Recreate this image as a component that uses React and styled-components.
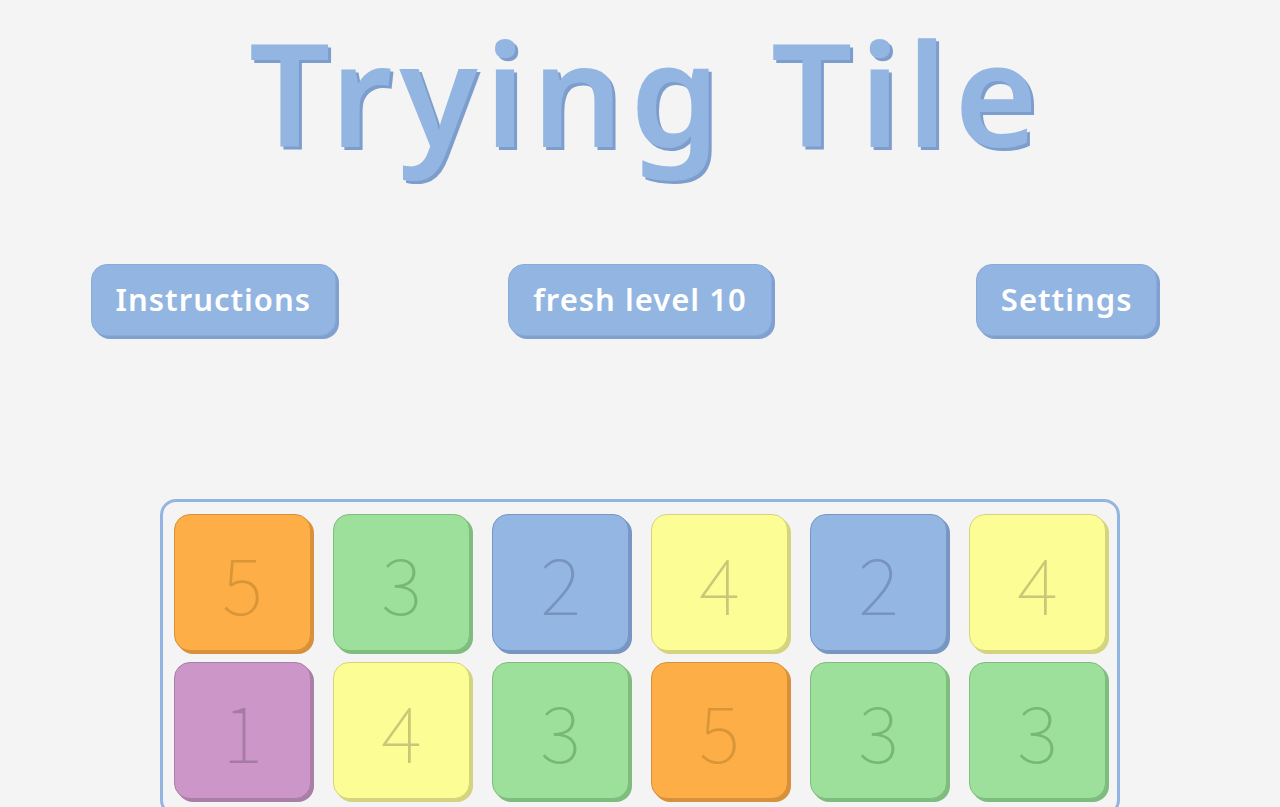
import React from "react";
import styled, { createGlobalStyle } from "styled-components";

const Global = createGlobalStyle`
  html, body { margin: 0; padding: 0; background: #f4f4f4; }
  body { font-family: "Noto Sans", "Open Sans", sans-serif; }
`;

const Page = styled.div`
  display: flex;
  flex-direction: column;
  align-items: center;
  min-height: 807px;
`;

const Title = styled.h1`
  margin: 0;
  padding: 0 0 12px 14px;
  font-family: "Noto Sans", sans-serif;
  font-weight: 600;
  font-size: 143px;
  line-height: 184px;
  letter-spacing: 7px;
  color: #93b5e1;
  text-shadow: 3px 3px 0 #7d9ecd;
`;

const ButtonRow = styled.div`
  margin-top: 68px;
  display: grid;
  grid-template-columns: repeat(3, 1fr);
  width: 100%;
  justify-items: center;
`;

const MenuButton = styled.button`
  height: 72px;
  padding: 0 24px 2px;
  border: 1px solid #88abdb;
  border-radius: 16px;
  background: #93b5e1;
  box-shadow: 3px 3px 0 #7fa0d0;
  color: #ffffff;
  font-family: "Noto Sans", sans-serif;
  font-weight: 600;
  font-size: 31px;
  letter-spacing: 1px;
  cursor: pointer;
`;

const Board = styled.div`
  margin-top: 163px;
  width: 960px;
  box-sizing: border-box;
  border: 3px solid #93b5e1;
  border-radius: 16px;
  padding: 12px 11px 14px 11px;
  display: grid;
  grid-template-columns: repeat(6, 137px);
  justify-content: space-between;
  row-gap: 11px;
`;

const palette = {
  orange: { bg: "#fdae46", edge: "#d8913a", text: "#d99638" },
  green: { bg: "#9de09b", edge: "#7fbd7e", text: "#79b777" },
  blue: { bg: "#94b6e3", edge: "#7896c2", text: "#7893bd" },
  yellow: { bg: "#fdfd96", edge: "#d4d47e", text: "#c8c878" },
  purple: { bg: "#cc97c8", edge: "#a97fa7", text: "#a57aa3" },
};

const Tile = styled.div`
  width: 137px;
  height: 137px;
  box-sizing: border-box;
  border-radius: 16px;
  background: ${(p) => palette[p.$c].bg};
  border: 1.5px solid ${(p) => palette[p.$c].edge};
  box-shadow: 3px 3px 0 ${(p) => palette[p.$c].edge};
  color: ${(p) => palette[p.$c].text};
  display: flex;
  align-items: center;
  justify-content: center;
  padding-bottom: 4px;
  font-family: "Noto Sans CJK JP", "DejaVu Sans", sans-serif;
  font-weight: 100;
  font-size: 78px;
  line-height: 1;
`;

const tiles = [
  [5, "orange"], [3, "green"], [2, "blue"], [4, "yellow"], [2, "blue"], [4, "yellow"],
  [1, "purple"], [4, "yellow"], [3, "green"], [5, "orange"], [3, "green"], [3, "green"],
];

export default function App() {
  return (
    <Page>
      <Global />
      <Title>Trying Tile</Title>
      <ButtonRow>
        <MenuButton>Instructions</MenuButton>
        <MenuButton>fresh level 10</MenuButton>
        <MenuButton>Settings</MenuButton>
      </ButtonRow>
      <Board>
        {tiles.map(([n, c], i) => (
          <Tile key={i} $c={c}>{n}</Tile>
        ))}
      </Board>
    </Page>
  );
}
